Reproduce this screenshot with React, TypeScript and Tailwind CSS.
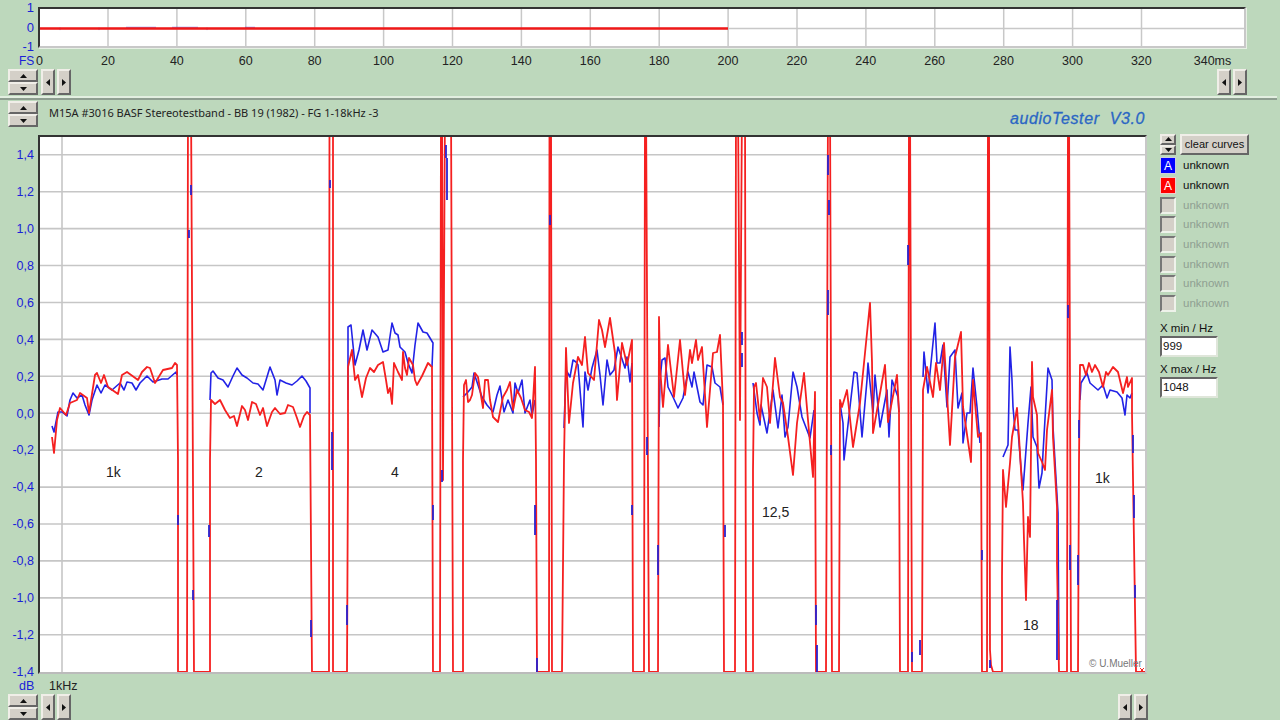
const RED =
  "52,437 54,453 57,420 60,408 66,415 70,403 77,400 80,393 87,398 89,413 95,375 97,373 101,383 104,375 108,387 118,394 122,375 127,372 138,380 142,372 147,367 150,368 155,383 163,370 172,368 175,363 177,365 178,460 178,672 187,672 188,100 191,100 194,672 210,672 210,460 211,400 215,404 220,400 225,410 230,418 234,416 237,426 242,406 245,410 248,420 252,402 256,404 260,415 263,408 267,426 272,412 275,408 280,414 285,413 288,405 293,407 297,418 300,427 304,416 307,412 310,415 312,672 329,672 329.5,100 333,100 333,672 347,672 348,460 348,367 352,350 355,380 358,375 362,397 366,378 370,368 374,372 378,365 383,362 386,380 388,393 390,388 392,404 394,363 398,372 402,380 403,352 405,368 407,375 409,358 413,365 415,380 417,385 422,376 428,363 432,367 433,672 440,672 441,100 442,100 443,480 445,100 451,100 453,672 463,672 463,460 464,385 466,380 468,402 470,400 472,395 475,373 478,377 483,408 485,380 488,380 490,400 493,417 498,422 503,397 507,390 510,382 513,410 517,390 521,398 525,410 529,412 532,418 535,367 536,460 537,672 549,672 549.5,100 551,100 552,672 562,672 564,460 566,348 569,423 573,383 578,357 582,365 585,337 588,373 594,380 599,320 602,330 605,347 610,318 615,353 617,400 622,343 627,365 632,340 633,672 644,672 645,100 646,100 649,672 658,672 659,317 660,367 663,407 668,345 674,397 680,340 685,395 690,350 692,363 696,340 698,360 702,347 707,427 713,353 717,352 720,335 723,403 724,672 735,672 736,100 738,100 740,420 742,100 745,100 746,672 753,672 753,470 754,387 756,383 760,420 763,378 767,387 770,423 775,358 780,397 783,403 788,437 793,475 797,423 804,373 808,420 813,477 815,392 816,672 826,672 828,100 830,100 832,672 839,672 840,400 842,407 847,390 853,447 860,403 870,303 872,362 873,433 885,365 888,422 897,375 899,412 900,672 908,672 909,100 910,100 912,672 922,672 923,390 927,367 933,397 936,363 940,390 944,343 950,445 955,357 961,332 963,407 971,462 973,380 978,437 981,433 982,672 987,672 988,100 989,100 990,650 991,665 993,672 1002,672 1002,577 1003,470 1006,507 1010,463 1012,437 1017,408 1019,437 1023,503 1024,540 1026,600 1028,517 1030,537 1032,362 1033,397 1037,415 1038,453 1042,462 1045,470 1047,430 1052,390 1053,437 1057,507 1057,563 1059,672 1067,672 1068,100 1069,100 1071,672 1078,672 1079,460 1080,365 1083,365 1086,375 1089,363 1092,372 1095,365 1099,372 1103,387 1106,372 1108,375 1113,367 1118,372 1123,393 1127,377 1128,387 1132,378 1132,413 1136,672 1145,672";

const BLUE = [
  "52,426 54,432 58,412 62,412 67,416 70,400 73,393 77,398 82,395 85,405 89,415 92,400 97,385 101,393 105,385 112,390 120,383 124,390 127,382 132,383 136,390 140,383 147,376 153,382 162,379 168,379 176,372 177,375",
  "210,400 211,373 213,371 218,378 223,380 228,387 233,376 237,368 242,375 247,378 253,383 258,384 263,390 270,367 275,380 277,395 280,380 286,383 292,385 297,381 302,376 306,381 310,388 310,413",
  "348,400 348,327 351,325 355,365 359,350 363,330 367,350 372,330 378,337 383,352 388,350 392,323 395,333 398,335 400,347 405,352 408,363 412,373 415,345 418,323 423,332 427,333 433,343 432,367",
  "463,397 468,392 472,387 474,373 478,385 482,397 487,405 493,412 497,395 500,386 504,412 508,400 513,413 515,383 518,393 522,380 525,413 530,400 532,415 535,400",
  "564,428 566,370 570,377 573,360 576,362 578,365 583,427 585,372 588,390 592,368 597,350 600,375 603,405 607,360 610,375 614,370 618,347 625,368 627,357 630,382 632,363",
  "659,427 660,380 662,360 665,358 668,387 673,397 678,408 683,398 688,372 692,387 694,372 700,402 703,405 707,365 712,367 715,383 720,387 723,405",
  "753,383 757,413 760,425 761,405 767,433 773,390 778,428 782,395 785,437 788,427 793,372 797,387 802,417 810,438 814,410",
  "840,403 843,423 844,460 850,407 854,372 857,373 862,437 867,380 868,363 873,413 875,375 880,427 887,390 889,437 892,380 898,397 899,412",
  "923,377 924,352 928,393 932,353 935,323 937,363 940,363 943,345 947,407 950,357 955,350 958,408 962,393 963,443 967,413 970,413 973,368 977,407 980,443",
  "1003,457 1008,445 1010,347 1012,380 1013,407 1015,430 1018,430 1021,468 1023,490 1028,423 1031,387 1033,437 1037,447 1039,488 1042,473 1043,453 1048,368 1052,380 1053,427 1058,513 1059,660",
  "1080,400 1081,383 1087,373 1090,383 1098,390 1103,385 1107,398 1110,390 1117,392 1122,398 1125,415 1127,395 1130,398 1132,393",
];

const STUBS: number[][] = [
  [178, 515, 525], [189, 230, 238], [191, 185, 195], [193, 590, 600], [209, 525, 537], [311, 620, 637], [330, 180, 188], [332, 432, 470], [347, 605, 625],
  [446, 145, 158], [447, 158, 200], [442, 470, 482], [433, 505, 520], [535, 505, 535], [537, 658, 672], [550, 215, 225], [632, 505, 515], [647, 437, 455],
  [658, 545, 575], [742, 332, 345], [742, 353, 367], [725, 525, 537], [817, 645, 672], [828, 155, 175], [829, 200, 215], [828, 290, 315], [831, 445, 455], [816, 605, 625],
  [908, 245, 265], [912, 652, 662], [920, 640, 655], [982, 550, 560], [990, 660, 668], [1057, 600, 660], [1068, 305, 318], [1070, 545, 570], [1078, 555, 585], [1079, 420, 438], [1133, 435, 453], [1134, 495, 518], [1135, 585, 598],
];

const GRID_Y = Array.from({ length: 14 }, (_, i) => 154.8 + i * 36.92);
const Y_LABELS = ["1,4", "1,2", "1,0", "0,8", "0,6", "0,4", "0,2", "0,0", "-0,2", "-0,4", "-0,6", "-0,8", "-1,0", "-1,2", "-1,4"];
const X_LABELS = ["20", "40", "60", "80", "100", "120", "140", "160", "180", "200", "220", "240", "260", "280", "300", "320"];
const TOP_GRID = Array.from({ length: 16 }, (_, i) => 108 + i * 68.9);

function Tri({ dir }: { dir: "up" | "down" | "left" | "right" }) {
  const pts = { up: "0,4 7,4 3.5,0", down: "0,0 7,0 3.5,4", left: "4,0 4,7 0,3.5", right: "0,0 0,7 4,3.5" }[dir];
  const horizontal = dir === "up" || dir === "down";
  return (
    <svg width={horizontal ? 7 : 4} height={horizontal ? 4 : 7} viewBox={horizontal ? "0 0 7 4" : "0 0 4 7"}>
      <polygon points={pts} fill="#111" />
    </svg>
  );
}

const bevel = "flex items-center justify-center bg-[#d4d0c8] border-t-2 border-l-2 border-r-2 border-b-2 border-t-[#f0eee8] border-l-[#f0eee8] border-r-[#666] border-b-[#666]";

function VSpin({ small }: { small?: boolean }) {
  return (
    <div className={small ? "flex flex-col w-[16px] h-[21px]" : "flex flex-col w-[30px] h-[26px]"}>
      <div className={`${bevel} flex-1`}><Tri dir="up" /></div>
      <div className={`${bevel} flex-1`}><Tri dir="down" /></div>
    </div>
  );
}

function HSpin() {
  return (
    <div className="flex gap-[2px] h-[26px]">
      <div className={`${bevel} w-[14px]`}><Tri dir="left" /></div>
      <div className={`${bevel} w-[14px]`}><Tri dir="right" /></div>
    </div>
  );
}

function Legend({ color }: { color?: string }) {
  return (
    <div className="flex items-center gap-[7px] h-[19.7px]">
      {color === "blue" && <div className="flex items-center justify-center w-[16px] h-[17px] bg-[#0000ff] border border-[#ccd] text-white text-[12px] leading-none">A</div>}
      {color === "red" && <div className="flex items-center justify-center w-[16px] h-[17px] bg-[#ff0000] border border-[#ecc] text-white text-[12px] leading-none">A</div>}
      {!color && <div className="w-[16px] h-[17px] bg-[#d4d0c8] border-2 border-t-[#777] border-l-[#777] border-r-[#eef2ea] border-b-[#eef2ea]" />}
      <span className={color ? "text-[#111]" : "text-[#8f9f92]"}>unknown</span>
    </div>
  );
}

function Field({ label, value }: { label: string; value: string }) {
  return (
    <div className="flex flex-col">
      <span className="leading-[15px] text-[#111]">{label}</span>
      <div className="w-[58px] h-[21px] bg-white border-2 border-t-[#666] border-l-[#666] border-r-[#dfe6da] border-b-[#dfe6da] pl-[1px] leading-[17px] text-[#111]">{value}</div>
    </div>
  );
}

export default function App() {
  return (
    <div className="w-[1280px] h-[720px] overflow-hidden bg-[#bdd8bc] flex flex-col text-[12px] font-['Liberation_Sans',sans-serif]">
      {/* top strip */}
      <div className="h-[96px] shrink-0 flex flex-col pt-[7px]">
        <div className="flex h-[41px]">
          <div className="w-[38px] pr-[4px] h-[52px] flex flex-col justify-between items-end text-[#1a22d8] text-[13px] leading-[13px] -mt-[6px]">
            <span>1</span><span>0</span><span>-1</span>
          </div>
          <div className="w-[1208px] h-[41px] border-2 border-t-[#333] border-l-[#333] border-r-[#c8c8c8] border-b-[#c8c8c8] bg-white shadow-[1px_1px_0_#e6f0e4]">
            <svg className="block w-full h-full blur-[0.3px]" viewBox="40 9 1204 36" preserveAspectRatio="none">
              {TOP_GRID.map((x) => <line key={x} x1={x} x2={x} y1={9} y2={45} stroke="#c8c8c8" strokeWidth="1.5" />)}
              <line x1={40} x2={1244} y1={28} y2={28} stroke="#c8c8c8" strokeWidth="1.5" />
              <path d="M60 27v2.5M99 27v2.5M126 26.8h30M172 26.8h26M207 27v2.5M245 26.8h10" stroke="#3030e0" strokeWidth="0.6" fill="none" />
              <line x1={40} x2={728} y1={28} y2={28} stroke="#f01818" strokeWidth="2.4" />
            </svg>
          </div>
        </div>
        <div className="flex items-center h-[14px] mt-[6px] text-[#222] text-[12.5px]">
          <span className="w-[36px] pl-[19px] text-[#1a22d8] text-[12px]">FS</span>
          <span className="w-[8px]">0</span>
          <div className="flex ml-[29.5px]">
            {X_LABELS.map((l) => <span key={l} className="w-[68.9px] text-center">{l}</span>)}
          </div>
          <span className="ml-[18px]">340ms</span>
        </div>
        <div className="flex mt-[1px] px-[8px] pr-[33px] justify-between h-[27px]">
          <div className="flex gap-[3px]"><VSpin /><HSpin /></div>
          <HSpin />
        </div>
      </div>

      {/* divider */}
      <div className="h-[4px] shrink-0 w-[1277px] border-t-2 border-b-2 border-t-[#e2eee0] border-b-[#8e9e90]" />

      {/* title row */}
      <div className="h-[35px] shrink-0 flex items-start pl-[8px] pr-[135px] pt-[1px]">
        <VSpin />
        <span className="ml-[11px] mt-[5px] text-[#222] text-[11px] font-['Noto_Sans',sans-serif] leading-[14px]">M15A #3016 BASF Stereotestband - BB 19 (1982) - FG 1-18kHz -3</span>
        <span className="ml-auto mt-[8px] italic text-[#2a66c4] text-[16px] leading-[20px] tracking-[0.6px] whitespace-pre [-webkit-text-stroke:0.3px_#2a66c4]">audioTester  V3.0</span>
      </div>

      {/* main */}
      <div className="flex h-[539px] shrink-0">
        <div className="w-[38px] pr-[4px] flex flex-col items-end pt-[2px] text-[#1a22d8] text-[12.5px]">
          {Y_LABELS.map((l) => <span key={l} className="h-[36.92px] shrink-0 flex items-center leading-none">{l}</span>)}
        </div>
        <div className="relative w-[1109px] h-[539px] bg-white border-2 border-t-[#333] border-l-[#333] border-r-[#c8c8c8] border-b-[#bbb]">
          <svg className="block w-full h-full blur-[0.35px]" viewBox="40 137 1105 535" preserveAspectRatio="none">
            {GRID_Y.map((y) => <line key={y} x1={40} x2={1145} y1={y} y2={y} stroke="#c6c6c6" strokeWidth="1.6" />)}
            <line x1={62} x2={62} y1={137} y2={672} stroke="#c6c6c6" strokeWidth="1.6" />
            {BLUE.map((p) => <polyline key={p} points={p} fill="none" stroke="#2222e6" strokeWidth="1.6" strokeLinejoin="round" />)}
            <polyline points={RED} fill="none" stroke="#f52020" strokeWidth="1.8" strokeLinejoin="round" />
            {STUBS.map(([x, a, b]) => <line key={`${x}-${a}`} x1={x} x2={x} y1={a} y2={b} stroke="#2a22d0" strokeWidth="1.8" />)}
            <path d="M1140 668l4 4M1144 668l-4 4" stroke="#f52020" strokeWidth="1" />
          </svg>
          <span className="absolute left-[66px] top-[325px] text-[14px] text-[#222]">1k</span>
          <span className="absolute left-[215px] top-[325px] text-[14px] text-[#222]">2</span>
          <span className="absolute left-[351px] top-[325px] text-[14px] text-[#222]">4</span>
          <span className="absolute left-[722px] top-[365px] text-[14px] text-[#222]">12,5</span>
          <span className="absolute left-[983px] top-[478px] text-[14px] text-[#222]">18</span>
          <span className="absolute left-[1055px] top-[331px] text-[14px] text-[#222]">1k</span>
          <span className="absolute left-[1049px] top-[519px] text-[10px] text-[#777]">© U.Mueller</span>
        </div>

        {/* right panel */}
        <div className="ml-[13px] w-[95px] flex flex-col text-[11.5px]">
          <div className="flex gap-[4px] h-[22px] mt-[-1px]">
            <VSpin small />
            <div className={`${bevel} w-[69px] h-[21px] text-[#111] text-[11px]`}>clear curves</div>
          </div>
          <div>
            <Legend color="blue" />
            <Legend color="red" />
            <Legend /><Legend /><Legend /><Legend /><Legend /><Legend />
          </div>
          <div className="mt-[7px] flex flex-col gap-[5px]">
            <Field label="X min / Hz" value="999" />
            <Field label="X max / Hz" value="1048" />
          </div>
        </div>
      </div>

      {/* bottom */}
      <div className="flex-1 flex flex-col">
        <div className="flex h-[20px] items-end pb-[2px] text-[12.5px] leading-none">
          <span className="w-[49px] pl-[19px] text-[#1a22d8]">dB</span>
          <span className="text-[#222]">1kHz</span>
        </div>
        <div className="flex pl-[8px] w-[1148px] justify-between">
          <div className="flex gap-[3px]"><VSpin /><HSpin /></div>
          <HSpin />
        </div>
      </div>
    </div>
  );
}
